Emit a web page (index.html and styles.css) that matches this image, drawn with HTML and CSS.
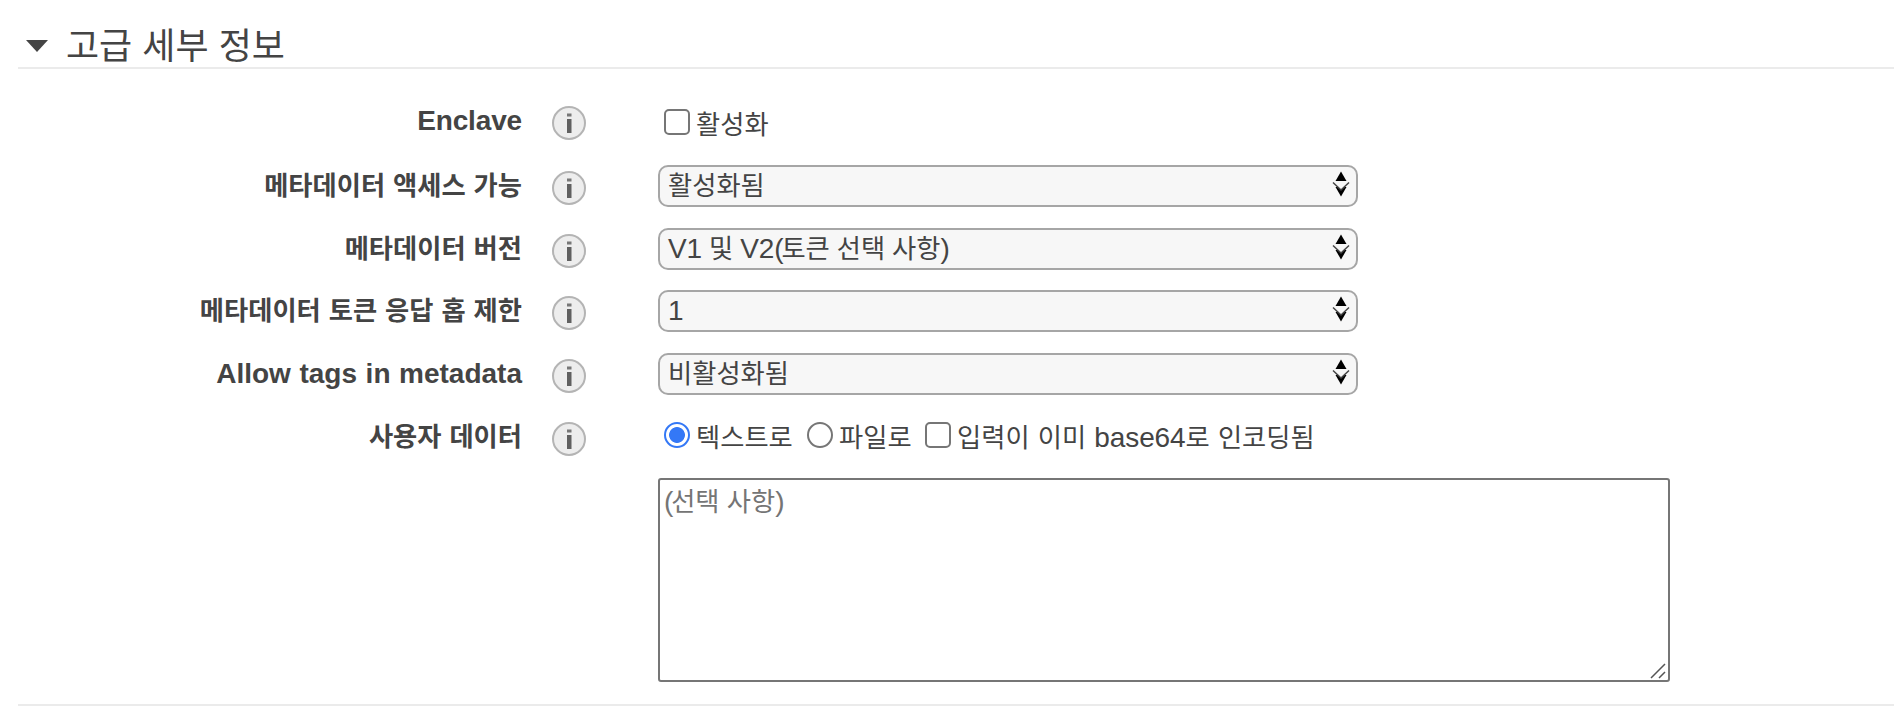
FILE: index.html
```html
<!DOCTYPE html>
<html lang="ko">
<head>
<meta charset="utf-8">
<title>고급 세부 정보</title>
<link rel="stylesheet" href="styles.css">
</head>
<body>
<svg class="defs" width="0" height="0">
  <symbol id="info" viewBox="0 0 36 36">
    <circle cx="18" cy="18" r="16" fill="#ededed" stroke="#b4b4b4" stroke-width="2"/>
    <rect x="16" y="8.500" width="4.500" height="3" fill="#777"/>
    <rect x="16" y="14" width="4.500" height="14" fill="#606060"/>
  </symbol>
  <symbol id="updown" viewBox="0 0 18 26">
    <path d="M9 0.500L14.500 10H3.500Z" fill="#000"/>
    <path d="M3.500 16H14.500L9 25.500Z" fill="#000"/>
    <path d="M1 11.500L9 19L17 11.500" fill="#f7f7f7" stroke="#444" stroke-width="1.500"/>
  </symbol>
</svg>
<section class="panel">
  <header class="panel-head">
    <svg class="caret" width="24" height="14" viewBox="0 0 24 14"><path d="M1 1H23L12 13Z" fill="#444"/></svg>
    <h2 class="title">고급 세부 정보</h2>
  </header>
  <div class="form">
    <div class="row row-first">
      <div class="label"><span class="en">Enclave</span></div>
      <svg class="info"><use href="#info"/></svg>
      <div class="options"><input type="checkbox" class="box"><span class="text">활성화</span></div>
    </div>
    <div class="row">
      <div class="label">메타데이터 액세스 가능</div>
      <svg class="info"><use href="#info"/></svg>
      <div class="select"><span>활성화됨</span><svg class="updown"><use href="#updown"/></svg></div>
    </div>
    <div class="row">
      <div class="label">메타데이터 버전</div>
      <svg class="info"><use href="#info"/></svg>
      <div class="select"><span><span class="en">V1</span> 및 <span class="en">V2<span class="paren">(</span></span>토큰 선택 사항<span class="en paren">)</span></span><svg class="updown"><use href="#updown"/></svg></div>
    </div>
    <div class="row">
      <div class="label">메타데이터 토큰 응답 홉 제한</div>
      <svg class="info"><use href="#info"/></svg>
      <div class="select"><span class="en one">1</span><svg class="updown"><use href="#updown"/></svg></div>
    </div>
    <div class="row">
      <div class="label"><span class="en">Allow tags in metadata</span></div>
      <svg class="info"><use href="#info"/></svg>
      <div class="select"><span>비활성화됨</span><svg class="updown"><use href="#updown"/></svg></div>
    </div>
    <div class="row row-last">
      <div class="label">사용자 데이터</div>
      <svg class="info"><use href="#info"/></svg>
      <div class="options">
        <input type="radio" name="mode" class="box dot" checked><span class="text w-text">텍스트로</span>
        <input type="radio" name="mode" class="box dot"><span class="text w-file">파일로</span>
        <input type="checkbox" class="box"><span class="text">입력이 이미 <span class="en">base64</span>로 인코딩됨</span>
      </div>
    </div>
    <div class="area">
      <span class="placeholder"><span class="en paren">(</span>선택 사항<span class="en paren">)</span></span>
      <svg class="grip" width="16" height="16" viewBox="0 0 16 16"><path d="M1 15L15 1M9 15L15 9" stroke="#555" stroke-width="1.500"/></svg>
    </div>
  </div>
</section>
</body>
</html>
```
FILE: styles.css
```css
* { box-sizing: border-box; }
body {
  margin: 0;
  background: #fff;
  color: #444;
  font: 26.3px/42px "Noto Sans CJK KR", sans-serif;
  white-space: nowrap;
}
.defs { display: block; }
.panel {
  margin-left: 18px;
  height: 706px;
  border-bottom: 2px solid #ebebeb;
}
.panel-head {
  display: flex;
  align-items: center;
  height: 69px;
  padding: 18px 0 0 7px;
  border-bottom: 2px solid #ebebeb;
}
.caret { margin: 6px 17px 0 0; }
.title {
  margin: 0;
  font-size: 36px;
  line-height: 46px;
  font-weight: 400;
}
.form { padding-top: 31px; }
.row {
  display: grid;
  grid-template-columns: 504px 36px 1fr;
  height: 42px;
  margin-bottom: 20.7px;
}
.row-first { margin-bottom: 23px; }
.label {
  height: 42px;
  line-height: 38px;
  text-align: right;
  font-weight: 700;
  word-spacing: 0.6px;
}
.en {
  font-family: "Liberation Sans", Arial, sans-serif;
  font-size: 28px;
  letter-spacing: -0.1px;
  line-height: 1;
}
.label .en { letter-spacing: 0; word-spacing: 0.8px; }
.row-first .label .en { letter-spacing: -0.15px; }
.paren { letter-spacing: -2.2px; }
.info { width: 36px; height: 36px; margin: 5px 0 0 29px; }
.select {
  display: flex;
  align-items: center;
  justify-content: space-between;
  width: 700px;
  height: 42px;
  margin-left: 100px;
  padding: 0 6px 4px 8px;
  line-height: 34px;
  word-spacing: -0.4px;
  border: 2px solid #a6a6a6;
  border-radius: 10px;
  background: #f7f7f7;
}
.one { padding-top: 4px; }
.updown { width: 18px; height: 26px; }
.options { display: flex; align-items: center; margin-left: 106px; word-spacing: 0.8px; }
.text { padding-top: 2px; }
.box {
  appearance: none;
  flex: none;
  width: 26px;
  height: 26px;
  margin: 0 6px 0 0;
  border: 2px solid #767676;
  border-radius: 5px;
  background: #fff;
}
.row-last .options { height: 42px; margin-top: -2px; }
.dot { border-radius: 50%; }
.dot:checked {
  border-color: #3478f6;
  background: radial-gradient(circle, #3478f6 7.5px, #fff 8.3px);
}
.w-text { width: 111px; }
.w-file { width: 86px; }
.area {
  position: relative;
  width: 1012px;
  height: 204px;
  margin: 1px 0 0 640px;
  padding: 0 4px;
  line-height: 39px;
  border: 2px solid #767676;
  border-radius: 3px;
}
.placeholder { color: #757575; }
.grip { position: absolute; right: 2px; bottom: 1px; }
```
